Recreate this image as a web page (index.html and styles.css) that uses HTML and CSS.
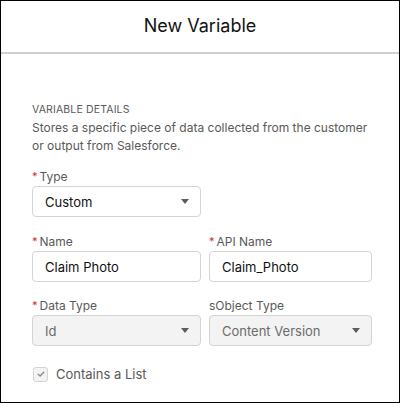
FILE: index.html
```html
<!DOCTYPE html>
<html>
<head>
<meta charset="utf-8">
<link rel="stylesheet" href="styles.css">
</head>
<body>
<div class="modal">
  <header class="modal-header">
    <h1 class="title">New Variable</h1>
  </header>
  <section class="modal-body">
    <h2 class="section-title">Variable Details</h2>
    <p class="section-desc">Stores a specific piece of data collected from the customer or output from Salesforce.</p>

    <div class="field field-half">
      <label class="label"><abbr class="req">*</abbr>Type</label>
      <div class="select">
        <span class="value">Custom</span>
        <span class="caret"></span>
      </div>
    </div>

    <div class="row">
      <div class="field">
        <label class="label"><abbr class="req">*</abbr>Name</label>
        <div class="input"><span class="value">Claim Photo</span></div>
      </div>
      <div class="field">
        <label class="label"><abbr class="req">*</abbr>API Name</label>
        <div class="input"><span class="value">Claim_Photo</span></div>
      </div>
    </div>

    <div class="row row-tight">
      <div class="field">
        <label class="label"><abbr class="req">*</abbr>Data Type</label>
        <div class="select disabled">
          <span class="value">Id</span>
          <span class="caret"></span>
        </div>
      </div>
      <div class="field">
        <label class="label">sObject Type</label>
        <div class="select disabled">
          <span class="value">Content Version</span>
          <span class="caret"></span>
        </div>
      </div>
    </div>

    <div class="checkbox-row">
      <span class="checkbox">
        <svg width="10" height="10" viewBox="0 0 10 10"><path d="M2.2 5.3 L4.1 7 L7.8 3.2" fill="none" stroke="#8a8886" stroke-width="1.3" stroke-linecap="round" stroke-linejoin="round"/></svg>
      </span>
      <span class="checkbox-label">Contains a List</span>
    </div>
  </section>
</div>
</body>
</html>
```

FILE: styles.css
```css
* { box-sizing: border-box; }
html, body { margin: 0; padding: 0; background: #fff; }
body {
  font-family: "Inter", "Liberation Sans", sans-serif;
  color: #080707;
}
.modal {
  width: 400px;
  height: 403px;
  border: 1px solid #000;
  background: #fff;
  overflow: hidden;
}
.modal-header {
  height: 53px;
  border-bottom: 2px solid #cfcfcf;
  display: flex;
  align-items: center;
  justify-content: center;
}
.title {
  margin: 0;
  font-size: 18px;
  font-weight: 400;
  color: #111;
  padding-bottom: 3px;
}
.modal-body {
  padding: 47px 28px 0 31px;
}
.section-title {
  margin: 0;
  font-size: 10.5px;
  font-weight: 400;
  letter-spacing: 0.15px;
  text-transform: uppercase;
  color: #595959;
  line-height: 18px;
}
.section-desc {
  margin: 0;
  font-size: 12px;
  line-height: 18px;
  color: #595959;
}
.field { display: flex; flex-direction: column; }
.field-half { width: 169px; margin-top: 13px; }
.label {
  font-size: 12px;
  line-height: 18px;
  color: #595959;
  margin-bottom: 0;
}
.req {
  color: #d0312d;
  text-decoration: none;
  font-size: 11px;
  margin-right: 2px;
  position: relative;
  top: -1px;
}
.row {
  display: grid;
  grid-template-columns: 169px 163px;
  column-gap: 8px;
  margin-top: 16px;
}
.row-tight { margin-top: 15px; }
.select, .input {
  height: 31px;
  border: 1px solid #d4d4d4;
  border-radius: 4px;
  display: flex;
  align-items: center;
  padding: 0 11px 0 12px;
  background: #fff;
}
.value {
  font-size: 13px;
  color: #111;
  flex: 1;
}
.caret {
  width: 0;
  height: 0;
  border-left: 4.5px solid transparent;
  border-right: 4.5px solid transparent;
  border-top: 5.5px solid #5c5c5c;
}
.select.disabled {
  background: #f3f3f3;
  border-color: #d4d4d4;
}
.select.disabled .value { color: #6b6b6b; }
.checkbox-row {
  display: flex;
  align-items: center;
  margin-top: 20px;
}
.checkbox {
  width: 15px;
  height: 15px;
  border: 1px solid #d4d4d4;
  border-radius: 3px;
  background: #f3f3f3;
  display: flex;
  align-items: center;
  justify-content: center;
  margin-left: 1px;
}
.checkbox-label {
  font-size: 13px;
  color: #595959;
  margin-left: 8px;
}
```
